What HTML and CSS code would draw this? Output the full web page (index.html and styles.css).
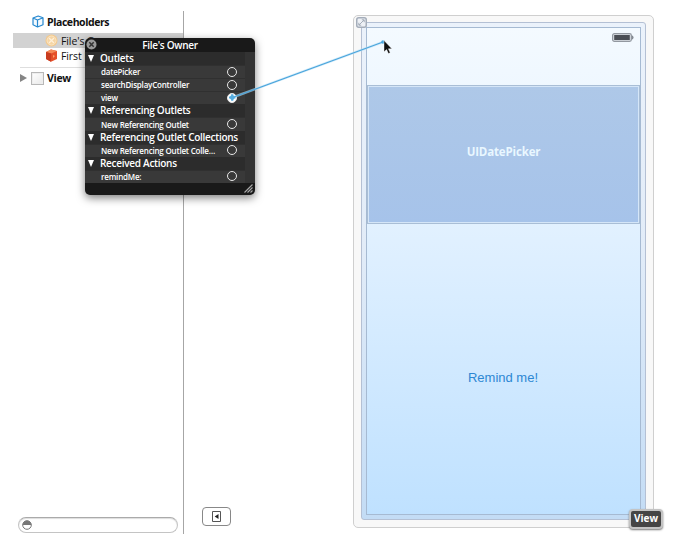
FILE: index.html
```html
<!DOCTYPE html>
<html lang="en">
<head>
<meta charset="utf-8">
<title>Interface Builder</title>
<link rel="stylesheet" href="styles.css">
</head>
<body>
<div class="workspace">
  <aside class="outline">
    <div class="row heading">
      <svg class="cube" viewBox="0 0 12 13" width="12" height="13"><path d="M1 3 6.2 1 11 2.8v7L5.5 12 1 9.8Z M1 3l4.5 2L11 2.8M5.5 5v7" fill="#f4faff" stroke="#2688cf" stroke-width="1.2" stroke-linejoin="round"/></svg>
      <span>Placeholders</span>
    </div>
    <div class="row item selected">
      <svg viewBox="0 0 13 13" width="13" height="13"><circle cx="6.5" cy="6.5" r="6" fill="#f4c98b"/><circle cx="6.5" cy="6.5" r="4.5" fill="#f6d5a4" stroke="#fae5c5"/><path d="m4 4 5 5M9 4 4 9" stroke="#fff0d8" stroke-width="1.3"/></svg>
      <span>File's O</span>
    </div>
    <div class="row item">
      <svg viewBox="0 0 13 13" width="13" height="13"><path d="m1 3 5-2.5L12 2v8l-6 2.7L1 10Z" fill="#e5502a"/><path d="m1 3 5-2.5L12 2 6.3 4.5Z" fill="#f48a58"/><path d="m1 3 5.3 1.5-.3 8.2L1 10Z" fill="#c93c20"/><path d="m8 6 2 1-2 2Z" fill="#ffa06a"/></svg>
      <span>First R</span>
    </div>
    <div class="row view-row">
      <svg viewBox="0 0 7 8" width="7" height="8"><path d="M0 0 7 4 0 8Z" fill="#858585"/></svg>
      <i class="view-icon"></i>
      <span>View</span>
    </div>
    <div class="filter">
      <svg viewBox="0 0 10 10" width="10" height="10"><circle cx="5" cy="5" r="4.3" fill="#fff" stroke="#777"/><path d="M.7 5a4.3 4.3 0 0 1 8.6 0Z" fill="#777"/></svg>
    </div>
  </aside>
  <main class="canvas">
    <div class="toggle">
      <svg viewBox="0 0 9 11" width="9" height="11"><path d="M.5.5h8v10h-8Z" fill="#fff" stroke="#555"/><path d="M6.5 3v5L2.7 5.5Z" fill="#222"/></svg>
    </div>
    <div class="device">
      <svg class="corner" viewBox="0 0 11 11" width="11" height="11"><rect x=".75" y=".75" width="9.5" height="9.5" rx="2" fill="#eef1f6" stroke="#a4adba" stroke-width="1.5"/><path d="m3 8 5-5M5.8 2.8h2.4v2.4M2.8 5.8v2.4h2.4" fill="none" stroke="#a4adba"/></svg>
      <div class="bezel">
        <div class="screen">
          <div class="status">
            <svg viewBox="0 0 22 9" width="22" height="9"><rect x=".6" y=".6" width="18.8" height="7.8" rx="1.8" fill="#dde2e7" stroke="#9298a0" stroke-width="1.2"/><rect x="2.2" y="2" width="15.6" height="5" fill="#4a4e55"/><path d="M20.5 2.8q1.4 1.7 0 3.4Z" fill="#777d85" stroke="#777d85" stroke-width=".7"/></svg>
          </div>
          <div class="picker"><span>UIDatePicker</span></div>
          <div class="action"><span>Remind me!</span></div>
        </div>
      </div>
      <div class="badge">View</div>
    </div>
  </main>
</div>

<section class="hud">
  <header><svg class="close" viewBox="0 0 11 11" width="11" height="11"><circle cx="5.5" cy="5.5" r="5" fill="#999"/><path d="m3.3 3.3 4.4 4.4M7.7 3.3 3.3 7.7" stroke="#333" stroke-width="1.5"/></svg><span>File's Owner</span></header>
  <div class="list">
    <div class="group"><i></i><b>Outlets</b></div>
    <div class="entry"><span>datePicker</span><em></em></div>
    <div class="entry"><span>searchDisplayController</span><em></em></div>
    <div class="entry"><span>view</span><em class="on"></em></div>
    <div class="group"><i></i><b>Referencing Outlets</b></div>
    <div class="entry"><span>New Referencing Outlet</span><em></em></div>
    <div class="group"><i></i><b>Referencing Outlet Collections</b></div>
    <div class="entry"><span>New Referencing Outlet Colle…</span><em></em></div>
    <div class="group"><i></i><b>Received Actions</b></div>
    <div class="entry"><span>remindMe:</span><em></em></div>
  </div>
  <svg class="grip" viewBox="0 0 9 9" width="9" height="9"><path d="M.5 8.5l8-8M3.5 8.5l5-5M6.5 8.5l2-2" stroke="#aaa" stroke-width="1.1"/></svg>
</section>

<svg class="connection" viewBox="0 0 696 540" width="696" height="540">
  <path d="M232.5 97.5 383 42" stroke="#bfe3f8" stroke-width="2.4" opacity=".6"/>
  <path d="M232.5 97.5 383 42" stroke="#4aa5dc" stroke-width="1.3"/>
  <path d="M232.2 94.3v6.4M229 97.5h6.4" stroke="#55acdf" stroke-width="2.2"/>
  <circle cx="232.2" cy="97.5" r="2.3" fill="#55acdf"/>
  <circle cx="383" cy="42" r="1.8" fill="#4aa5dc"/>
  <path d="M384 40.5v11.3l2.6-2.3 1.8 4 1.8-.8-1.8-3.9h3.5Z" fill="#111" stroke="#fff" stroke-width=".4"/>
</svg>
</body>
</html>
```

FILE: styles.css
```css
* { box-sizing: border-box; }
body { margin: 0; width: 696px; height: 540px; overflow: hidden; background: #fff; color: #111; font-family: "Open Sans", "Noto Sans", sans-serif; }
svg { display: block; flex: none; }
.workspace { display: grid; grid-template-columns: 171px 1fr; height: 523px; margin: 11px 0 0 13px; }
.outline { display: flex; flex-direction: column; border-right: 1px solid #a6a6a6; min-width: 0; }
.row { display: flex; align-items: center; white-space: nowrap; font-size: 10.5px; }
.heading { height: 22px; padding: 0 0 1px 19px; gap: 3px; font-weight: 700; letter-spacing: -.42px; }
.item { height: 15px; padding: 0 0 0 32px; gap: 3px; font-weight: 500; letter-spacing: -.1px; }
.selected { background: #d2d2d2; }
.view-row { height: 21px; margin: 4px 4px 0 7px; gap: 5px; border-top: 1px solid #dedede; font-weight: 700; letter-spacing: -.3px; }
.view-row span { margin-left: -2px; }
.view-icon { width: 13px; height: 13px; margin-left: -1px; background: linear-gradient(135deg, #fff, #e9e9e9); border: 1px solid #b8b8b8; box-shadow: inset 0 0 0 1px #eee; }
.filter { margin: auto 5px 1px 5px; height: 16px; padding: 2px 3px; border: 1px solid #c4c4c4; border-top-color: #aaa; border-radius: 8px; box-shadow: inset 0 1px 1px #ddd; }
.canvas { display: flex; align-items: flex-start; }
.toggle { display: flex; align-items: center; justify-content: center; width: 29px; height: 19px; margin: 496px 0 0 18px; border: 1px solid #888; border-radius: 4px; background: #fff; }
.device { position: relative; width: 301px; height: 513px; margin: 4px 0 0 122px; padding: 6px 7px; border: 1px solid #cfcfcf; border-radius: 5px; background: #f8f8f8; }
.corner { position: absolute; left: 2px; top: 1px; z-index: 1; }
.bezel { height: 498px; padding: 4px; border: 1px solid #b4c0d4; border-radius: 3px; background: linear-gradient(#ebf2fb, #e2ecf8 45%, #c3dcf5); }
.screen { height: 488px; border: 1px solid #a6bad2; background: linear-gradient(#f4faff, #e2f1ff 40%, #bfe1ff); }
.status { display: flex; justify-content: flex-end; height: 57px; padding: 5px 6px 0 0; }
.picker { display: flex; justify-content: center; height: 139px; padding-top: 57px; border: 1px solid #a9bed6; box-shadow: inset 0 0 0 1px #d5e6f8; background: linear-gradient(#aec8e8, #a6c3ea); color: #e9f7ff; font-size: 11.5px; font-weight: 700; line-height: 18px; letter-spacing: -.15px; }
.action { display: flex; justify-content: center; padding: 145px 1px 0 0; font: 13px/18px "Liberation Sans", sans-serif; color: #2d87d3; }
.badge { position: absolute; right: -10px; bottom: -2px; width: 34px; height: 20px; border: 2px solid #c4c4c4; border-radius: 4px; background: #454545; color: #fff; font-size: 10px; font-weight: 700; line-height: 15px; text-align: center; box-shadow: 0 1px 2px #777; }
.hud { position: absolute; left: 85px; top: 38px; width: 170px; height: 157px; border-radius: 5px; background: #191919; color: #fff; box-shadow: 0 3px 8px rgba(0,0,0,.5); }
.hud header { position: relative; height: 14px; line-height: 14px; font-size: 10px; font-weight: 600; letter-spacing: -.3px; text-align: center; }
.close { position: absolute; left: 1px; top: 1px; }
.list { display: grid; grid-template-rows: repeat(10, 13.1px); border-right: 10px solid #333; background: #393939; white-space: nowrap; }
.group, .entry { display: flex; align-items: center; }
.group { padding-left: 3px; background: #2c2c2c; font-size: 10px; line-height: 13px; letter-spacing: -.28px; }
.group b { margin-left: 6px; font-weight: 600; }
.group i { border: solid transparent; border-width: 7px 3.5px 0; border-top-color: #fff; }
.entry { justify-content: space-between; padding: 0 8px 1px 16px; border-top: 1px solid #303030; font-size: 8px; font-weight: 600; line-height: 11px; letter-spacing: -.2px; }
.entry em { width: 10px; height: 10px; border: 1.4px solid #e8e8e8; border-radius: 50%; }
.entry .on { background: #fff; }
.grip { position: absolute; right: 2px; bottom: 2px; }
.connection { position: absolute; left: 0; top: 0; pointer-events: none; }
```
